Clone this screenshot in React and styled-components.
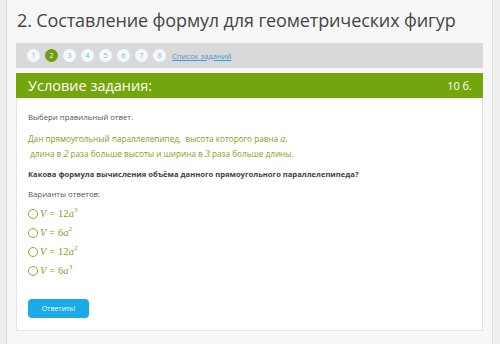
import React from "react";
import styled, { createGlobalStyle } from "styled-components";

const Global = createGlobalStyle`
  html, body { margin: 0; padding: 0; }
  body { background: #eeeeee; font-family: "Open Sans", "Noto Sans", sans-serif; }
`;

const Page = styled.div`
  margin: 0 7px 0 6px;
  min-height: 344px;
  box-sizing: border-box;
  background: #f7f7f7;
  border-left: 1px solid #dedede;
  border-right: 1px solid #dedede;
  padding: 7px 9px 0 9px;
`;

const Title = styled.h1`
  margin: 0 0 0 1px;
  font-size: 18px;
  font-weight: 400;
  color: #454545;
  line-height: 27px;
  white-space: nowrap;
  letter-spacing: -0.12px;
`;

const Pager = styled.div`
  margin-top: 9px;
  height: 25px;
  background: #d9d9d9;
  display: flex;
  align-items: center;
  padding-left: 11px;
  gap: 5px;
`;

const PageDot = styled.span`
  width: 13px;
  height: 13px;
  border-radius: 50%;
  background: ${(p) => (p.$active ? "#6e9e10" : "#f4f8fa")};
  color: ${(p) => (p.$active ? "#ffffff" : "#7fb6d8")};
  font-size: 7px;
  display: flex;
  align-items: center;
  justify-content: center;
  line-height: 1;
`;

const PagerLink = styled.a`
  font-size: 7.6px;
  color: #3a9bd6;
  text-decoration: underline;
  margin-left: 1px;
`;

const Panel = styled.section`
  margin-top: 5px;
`;

const PanelHead = styled.div`
  height: 25px;
  background: #73a50c;
  color: #ffffff;
  display: flex;
  align-items: center;
  justify-content: space-between;
  padding: 0 11px 0 12px;
  font-size: 14.5px;
  font-weight: 400;
`;

const Points = styled.span`
  font-size: 11px;
`;

const PanelBody = styled.div`
  background: #ffffff;
  border: 1px solid #e3e3e3;
  border-top: none;
  padding: 13px 11px 12px 11px;
  color: #555;
  font-size: 7.8px;
`;

const Para = styled.p`
  margin: 0 0 ${(p) => p.$mb || 0}px 0;
  line-height: ${(p) => p.$lh || 12}px;
  color: ${(p) => p.$color || "#555555"};
  font-weight: ${(p) => (p.$bold ? 700 : 400)};
  font-size: ${(p) => p.$size || "inherit"};
`;

const MathI = styled.span`
  font-family: "Liberation Serif", "DejaVu Serif", serif;
  font-style: italic;
  font-size: 10px;
`;

const Options = styled.div`
  display: flex;
  flex-direction: column;
`;

const Option = styled.label`
  display: flex;
  align-items: center;
  height: 19px;
  gap: 2px;
  color: #84a026;
`;

const Radio = styled.span`
  width: 8px;
  height: 8px;
  border-radius: 50%;
  border: 1.3px solid #8aab30;
  background: #fff;
  flex: none;
`;

const Formula = styled.span`
  font-family: "Liberation Serif", "DejaVu Serif", serif;
  font-size: 10.5px;
  color: #84a026;
  letter-spacing: 0.1px;
`;

const Var = styled.i``;

const Sup = styled.sup`
  font-size: 7px;
  font-style: normal;
  vertical-align: 5px;
  line-height: 0;
`;

const Button = styled.button`
  margin-top: 19px;
  width: 61px;
  height: 19px;
  border: none;
  border-radius: 4px;
  background: #1aaae8;
  color: #ffffff;
  font-family: "Open Sans", sans-serif;
  font-size: 7px;
  padding: 0;
`;

const options = [
  ["12", "3"],
  ["6", "2"],
  ["12", "2"],
  ["6", "3"],
];

export default function App() {
  return (
    <>
      <Global />
      <Page>
        <Title>2. Составление формул для геометрических фигур</Title>
        <Pager>
          {[1, 2, 3, 4, 5, 6, 7, 8].map((n) => (
            <PageDot key={n} $active={n === 2}>
              {n}
            </PageDot>
          ))}
          <PagerLink>Список заданий</PagerLink>
        </Pager>
        <Panel>
          <PanelHead>
            <span>Условие задания:</span>
            <Points>10 б.</Points>
          </PanelHead>
          <PanelBody>
            <Para $mb={8}>Выбери правильный ответ.</Para>
            <Para $color="#84a026" $lh={15} $mb={7} $size="8.2px">
              Дан прямоугольный параллелепипед,&nbsp; высота которого равна <MathI>a</MathI>,
              <br />
              &nbsp;длина в <MathI>2</MathI> раза больше высоты и ширина в <MathI>3</MathI> раза больше длины.
            </Para>
            <Para $bold $color="#3f3f3f" $mb={8} $size="7.6px">
              Какова формула вычисления объёма данного прямоугольного параллелепипеда?
            </Para>
            <Para $mb={4}>Варианты ответов:</Para>
            <Options>
              {options.map(([k, e], i) => (
                <Option key={i}>
                  <Radio />
                  <Formula>
                    <Var>V</Var> = {k}
                    <Var>a</Var>
                    <Sup>{e}</Sup>
                  </Formula>
                </Option>
              ))}
            </Options>
            <Button>Ответить!</Button>
          </PanelBody>
        </Panel>
      </Page>
    </>
  );
}
